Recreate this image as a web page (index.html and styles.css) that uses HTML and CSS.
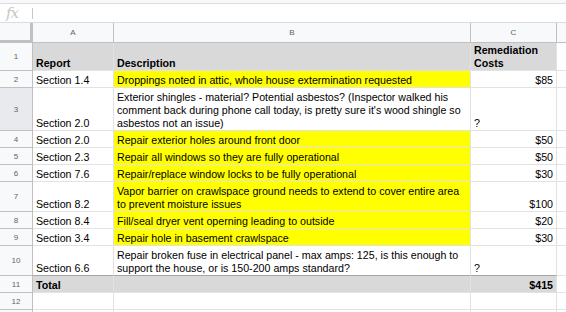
FILE: index.html
```html
<!DOCTYPE html>
<html>
<head>
<meta charset="utf-8">
<link rel="stylesheet" href="styles.css">
</head>
<body>
<div class="top-strip"></div>
<div class="formula-bar">
  <span class="fx">fx</span>
  <span class="fx-sep"></span>
  <div class="fx-input"></div>
</div>
<div class="sheet">
  <div class="corner"></div>
  <div class="colhead">A</div>
  <div class="colhead">B</div>
  <div class="colhead">C</div>
  <div class="colhead last"></div>

  <div class="rowhead">1</div>
  <div class="cell head"><span>Report</span></div>
  <div class="cell head"><span>Description</span></div>
  <div class="cell head"><span>Remediation<br>Costs</span></div>
  <div class="cell last"></div>

  <div class="rowhead">2</div>
  <div class="cell"><span>Section 1.4</span></div>
  <div class="cell hl"><span>Droppings noted in attic, whole house extermination requested</span></div>
  <div class="cell num"><span>$85</span></div>
  <div class="cell last"></div>

  <div class="rowhead active">3</div>
  <div class="cell"><span>Section 2.0</span></div>
  <div class="cell"><span>Exterior shingles - material? Potential asbestos? (Inspector walked his<br>comment back during phone call today, is pretty sure it's wood shingle so<br>asbestos not an issue)</span></div>
  <div class="cell"><span>?</span></div>
  <div class="cell last"></div>

  <div class="rowhead">4</div>
  <div class="cell"><span>Section 2.0</span></div>
  <div class="cell hl"><span>Repair exterior holes around front door</span></div>
  <div class="cell num"><span>$50</span></div>
  <div class="cell last"></div>

  <div class="rowhead">5</div>
  <div class="cell"><span>Section 2.3</span></div>
  <div class="cell hl"><span>Repair all windows so they are fully operational</span></div>
  <div class="cell num"><span>$50</span></div>
  <div class="cell last"></div>

  <div class="rowhead">6</div>
  <div class="cell"><span>Section 7.6</span></div>
  <div class="cell hl"><span>Repair/replace window locks to be fully operational</span></div>
  <div class="cell num"><span>$30</span></div>
  <div class="cell last"></div>

  <div class="rowhead">7</div>
  <div class="cell"><span>Section 8.2</span></div>
  <div class="cell hl"><span>Vapor barrier on crawlspace ground needs to extend to cover entire area<br>to prevent moisture issues</span></div>
  <div class="cell num"><span>$100</span></div>
  <div class="cell last"></div>

  <div class="rowhead">8</div>
  <div class="cell"><span>Section 8.4</span></div>
  <div class="cell hl"><span>Fill/seal dryer vent operning leading to outside</span></div>
  <div class="cell num"><span>$20</span></div>
  <div class="cell last"></div>

  <div class="rowhead">9</div>
  <div class="cell"><span>Section 3.4</span></div>
  <div class="cell hl"><span>Repair hole in basement crawlspace</span></div>
  <div class="cell num"><span>$30</span></div>
  <div class="cell last"></div>

  <div class="rowhead">10</div>
  <div class="cell"><span>Section 6.6</span></div>
  <div class="cell"><span>Repair broken fuse in electrical panel - max amps: 125, is this enough to<br>support the house, or is 150-200 amps standard?</span></div>
  <div class="cell"><span>?</span></div>
  <div class="cell last"></div>

  <div class="rowhead">11</div>
  <div class="cell total"><span>Total</span></div>
  <div class="cell total"></div>
  <div class="cell total num"><span>$415</span></div>
  <div class="cell last"></div>

  <div class="rowhead">12</div>
  <div class="cell"></div>
  <div class="cell"></div>
  <div class="cell"></div>
  <div class="cell last"></div>

  <div class="rowhead"></div>
  <div class="cell"></div>
  <div class="cell"></div>
  <div class="cell"></div>
  <div class="cell last"></div>
</div>
</body>
</html>
```

FILE: styles.css
```css
* {
  box-sizing: border-box;
}

html, body {
  margin: 0;
  padding: 0;
  background: #ffffff;
  overflow: hidden;
}

body {
  font-family: "Liberation Sans", Arial, sans-serif;
  font-size: 10.67px;
  color: #000000;
  width: 566px;
  height: 312px;
}

/* thin strip above the formula bar */
.top-strip {
  height: 3px;
  background: #f8f9fa;
}

.formula-bar {
  height: 20px;
  display: flex;
  align-items: center;
  border-top: 1px solid #dadce0;
  border-bottom: 1px solid #dadce0;
  background: #ffffff;
}

.fx {
  width: 30px;
  padding-left: 6px;
  font-family: "DejaVu Serif", "Liberation Serif", serif;
  font-style: italic;
  font-size: 15px;
  line-height: 18px;
  color: #c4c7c5;
  letter-spacing: -1px;
}

.fx-sep {
  width: 1px;
  height: 11px;
  background: #c4c7c5;
  margin-left: 2px;
}

.fx-input {
  flex: 1;
  height: 14px;
  margin-left: 7px;
  background: #ffffff;
}

/* spreadsheet grid */
.sheet {
  display: grid;
  grid-template-columns: 33px 81px 357px 86px 1fr;
  grid-template-rows: 20px 28px 17px 43px 17px 17px 17px 30px 17px 17px 30px 17px 17px 17px;
}

.corner {
  background: #f8f9fa;
  border-right: 1px solid #c0c0c0;
  border-bottom: 1px solid #c0c0c0;
  box-shadow: inset -2px -2px 0 #c0c0c0;
}

.colhead {
  background: #f8f9fa;
  border-right: 1px solid #c0c0c0;
  border-bottom: 1px solid #c0c0c0;
  color: #5f6368;
  font-size: 8px;
  display: flex;
  align-items: center;
  justify-content: center;
}

.colhead.last {
  border-right: none;
}

.rowhead {
  background: #f8f9fa;
  border-right: 1px solid #c0c0c0;
  border-bottom: 1px solid #c0c0c0;
  color: #5f6368;
  font-size: 8px;
  display: flex;
  align-items: center;
  justify-content: center;
}

.rowhead.active {
  background: #e8eaed;
}

.cell {
  border-right: 1px solid #e2e2e2;
  border-bottom: 1px solid #e2e2e2;
  padding: 0 3px 0 3px;
  line-height: 13px;
  display: flex;
  flex-direction: column;
  justify-content: flex-end;
  white-space: nowrap;
  overflow: visible;
}

.cell.last {
  border-right: none;
}

.cell.head {
  background: #d9d9d9;
  font-weight: bold;
}

.cell.hl {
  background: #ffff00;
}

.cell.num {
  text-align: right;
}

.cell.total {
  background: #d9d9d9;
  font-weight: bold;
  border-top: 1px solid #a6a6a6;
  margin-top: -1px;
}
```
